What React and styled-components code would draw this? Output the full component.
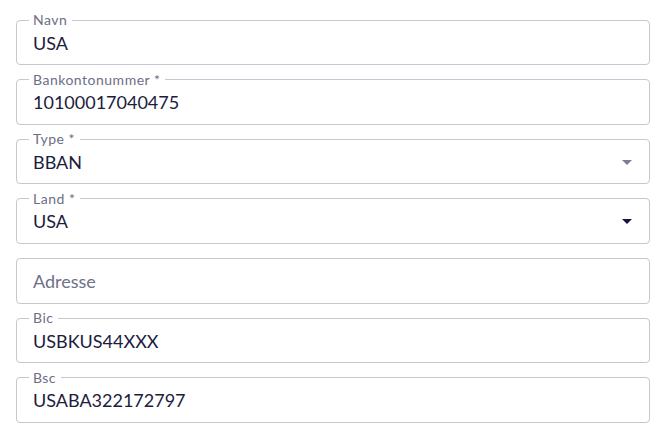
import React from "react";
import styled, { createGlobalStyle } from "styled-components";

const FIELDS = [
  { label: "Navn", value: "USA" },
  { label: "Bankontonummer *", value: "10100017040475" },
  { label: "Type *", value: "BBAN", select: "muted" },
  { label: "Land *", value: "USA", select: "active" },
  { label: "", placeholder: "Adresse" },
  { label: "Bic", value: "USBKUS44XXX" },
  { label: "Bsc", value: "USABA322172797" },
];

const GlobalStyle = createGlobalStyle`
  body {
    margin: 0;
    background: #ffffff;
    font-family: "Lato", "Noto Sans", sans-serif;
  }
`;

const Form = styled.form`
  display: flex;
  flex-direction: column;
  gap: 7.67px;
  padding: 13px 11px 0 16px;
`;

const Field = styled.fieldset`
  margin: 0;
  min-width: 0;
  padding: 0 10px 10.5px 12px;
  border: 1px solid #c7c7cf;
  border-radius: 4px;
`;

const Legend = styled.legend`
  height: 14px;
  padding: ${(p) => (p.$empty ? "0" : "0 5px 0 4px")};
  font-size: 14px;
  line-height: 14px;
  letter-spacing: 0.5px;
  color: #6c6e86;
`;

const Row = styled.div`
  display: flex;
  align-items: center;
  height: 22px;
  padding: 4.5px 0 0 4px;
`;

const Value = styled.span`
  flex: 1;
  font-size: 18px;
  line-height: 22px;
  color: ${(p) => (p.$placeholder ? "#6e7089" : "#1c1c3d")};
`;

const Arrow = styled.svg`
  display: block;
  width: 24px;
  height: 24px;
  margin: -1px 0;
  fill: ${(p) => (p.$active ? "#15124a" : "#7b7d93")};
`;

const DropIcon = ({ active }) => (
  <Arrow viewBox="0 0 24 24" $active={active}>
    <path d="M7 10l5 5 5-5z" />
  </Arrow>
);

const App = () => {
  return (
    <>
      <GlobalStyle />
      <Form>
        {FIELDS.map((f, i) => (
          <Field key={i}>
            <Legend $empty={!f.label}>{f.label}</Legend>
            <Row>
              <Value $placeholder={!f.value}>{f.value || f.placeholder}</Value>
              {f.select && <DropIcon active={f.select === "active"} />}
            </Row>
          </Field>
        ))}
      </Form>
    </>
  );
};

export default App;
